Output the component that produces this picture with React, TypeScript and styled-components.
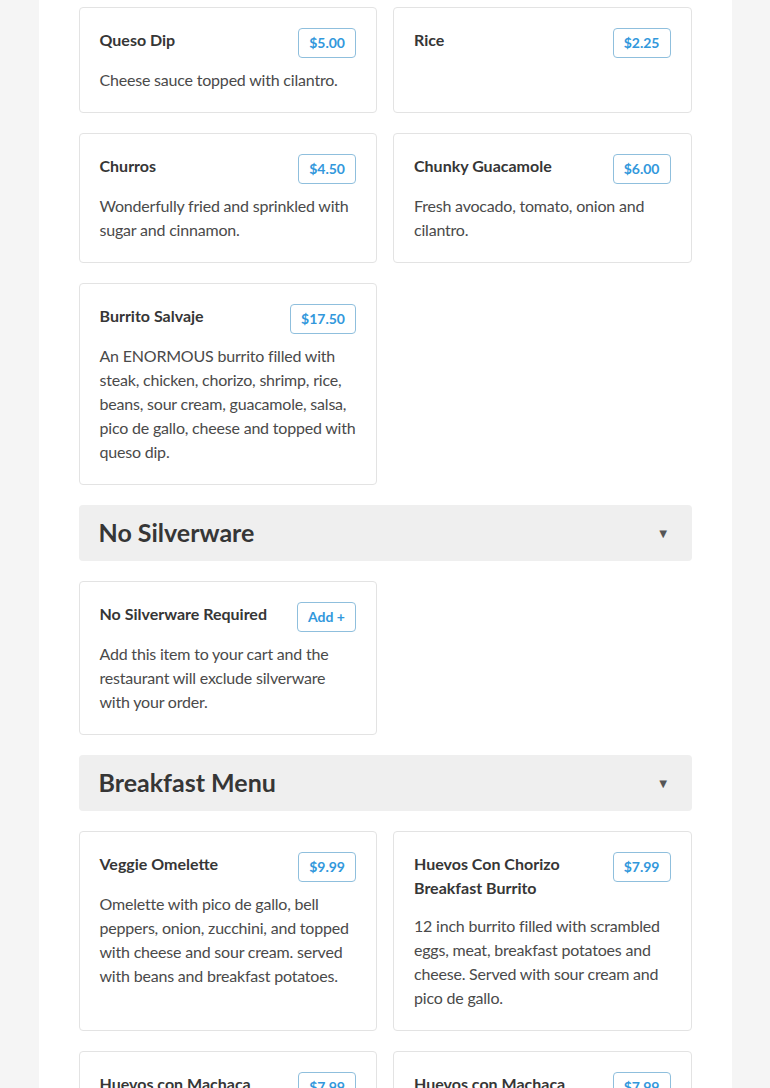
import React from "react";
import styled, { createGlobalStyle } from "styled-components";

const GlobalStyle = createGlobalStyle`
  html, body {
    margin: 0;
    padding: 0;
    background: #f5f5f5;
    font-family: Lato, "Liberation Sans", sans-serif;
  }
  * {
    box-sizing: border-box;
  }
`;

const Page = styled.div`
  width: 693px;
  margin: 0 auto;
  min-height: 1088px;
  background: #fff;
  padding: 7px 40px 40px 40px;
  display: flex;
  flex-direction: column;
  gap: 20px;
`;

const Section = styled.section`
  display: flex;
  flex-direction: column;
  gap: 20px;
`;

const SectionHeader = styled.div`
  display: flex;
  align-items: center;
  justify-content: space-between;
  height: 56px;
  padding: 0 22px 0 20px;
  background: #efefef;
  border-radius: 4px;
  cursor: pointer;
`;

const SectionTitle = styled.h2`
  margin: 0 0 2px 0;
  color: #363636;
  font-family: Lato, "Liberation Sans", sans-serif;
  font-size: 25px;
  font-weight: 700;
  line-height: 28px;
`;

const Caret = styled.span`
  color: #555;
  font-size: 13px;
  line-height: 1;
  padding-top: 1px;
`;

const ItemGrid = styled.div`
  display: grid;
  grid-template-columns: 1fr 1fr;
  gap: 20px 16px;
`;

const ItemCard = styled.div`
  display: flex;
  flex-direction: column;
  gap: 10px;
  padding: 20px;
  background: #fff;
  border: 1px solid #e3e3e3;
  border-radius: 4px;
`;

const ItemHeader = styled.div`
  display: flex;
  align-items: flex-start;
  justify-content: space-between;
  gap: 12px;
`;

const ItemName = styled.div`
  flex: 1;
  color: #363636;
  font-size: 16px;
  font-weight: 700;
  line-height: 24px;
  padding-bottom: 4px;
`;

const PriceTag = styled.button`
  flex-shrink: 0;
  height: 30px;
  padding: 0 10px;
  background: #fff;
  border: 1px solid #8fbfdd;
  border-radius: 4px;
  color: #3298dc;
  font-family: Lato, "Liberation Sans", sans-serif;
  font-size: 14px;
  font-weight: 700;
  line-height: 28px;
  cursor: pointer;
`;

const ItemDescription = styled.p`
  margin: 0;
  color: #4a4a4a;
  font-size: 16px;
  line-height: 24px;
  letter-spacing: -0.2px;
`;

interface MenuItem {
  name: string;
  price: string;
  description?: string;
}

interface MenuSection {
  title?: string;
  items: MenuItem[];
}

const sections: MenuSection[] = [
  {
    items: [
      { name: "Queso Dip", price: "$5.00", description: "Cheese sauce topped with cilantro." },
      { name: "Rice", price: "$2.25" },
      {
        name: "Churros",
        price: "$4.50",
        description: "Wonderfully fried and sprinkled with sugar and cinnamon.",
      },
      {
        name: "Chunky Guacamole",
        price: "$6.00",
        description: "Fresh avocado, tomato, onion and cilantro.",
      },
      {
        name: "Burrito Salvaje",
        price: "$17.50",
        description:
          "An ENORMOUS burrito filled with steak, chicken, chorizo, shrimp, rice, beans, sour cream, guacamole, salsa, pico de gallo, cheese and topped with queso dip.",
      },
    ],
  },
  {
    title: "No Silverware",
    items: [
      {
        name: "No Silverware Required",
        price: "Add +",
        description:
          "Add this item to your cart and the restaurant will exclude silverware with your order.",
      },
    ],
  },
  {
    title: "Breakfast Menu",
    items: [
      {
        name: "Veggie Omelette",
        price: "$9.99",
        description:
          "Omelette with pico de gallo, bell peppers, onion, zucchini, and topped with cheese and sour cream. served with beans and breakfast potatoes.",
      },
      {
        name: "Huevos Con Chorizo Breakfast Burrito",
        price: "$7.99",
        description:
          "12 inch burrito filled with scrambled eggs, meat, breakfast potatoes and cheese. Served with sour cream and pico de gallo.",
      },
      {
        name: "Huevos con Machaca Breakfast Burrito",
        price: "$7.99",
        description:
          "12 inch burrito filled with scrambled eggs, machaca, breakfast potatoes and cheese.",
      },
      {
        name: "Huevos con Machaca Plate",
        price: "$7.99",
        description: "Scrambled eggs with machaca, served with rice, beans and tortillas.",
      },
    ],
  },
];

const MenuCard: React.FC<{ item: MenuItem }> = ({ item }) => (
  <ItemCard>
    <ItemHeader>
      <ItemName>{item.name}</ItemName>
      <PriceTag>{item.price}</PriceTag>
    </ItemHeader>
    {item.description ? <ItemDescription>{item.description}</ItemDescription> : null}
  </ItemCard>
);

const App: React.FC = () => {
  return (
    <>
      <GlobalStyle />
      <Page>
        {sections.map((section, i) => (
          <Section key={i}>
            {section.title ? (
              <SectionHeader>
                <SectionTitle>{section.title}</SectionTitle>
                <Caret>▼</Caret>
              </SectionHeader>
            ) : null}
            <ItemGrid>
              {section.items.map((item) => (
                <MenuCard key={item.name} item={item} />
              ))}
            </ItemGrid>
          </Section>
        ))}
      </Page>
    </>
  );
};

export default App;
